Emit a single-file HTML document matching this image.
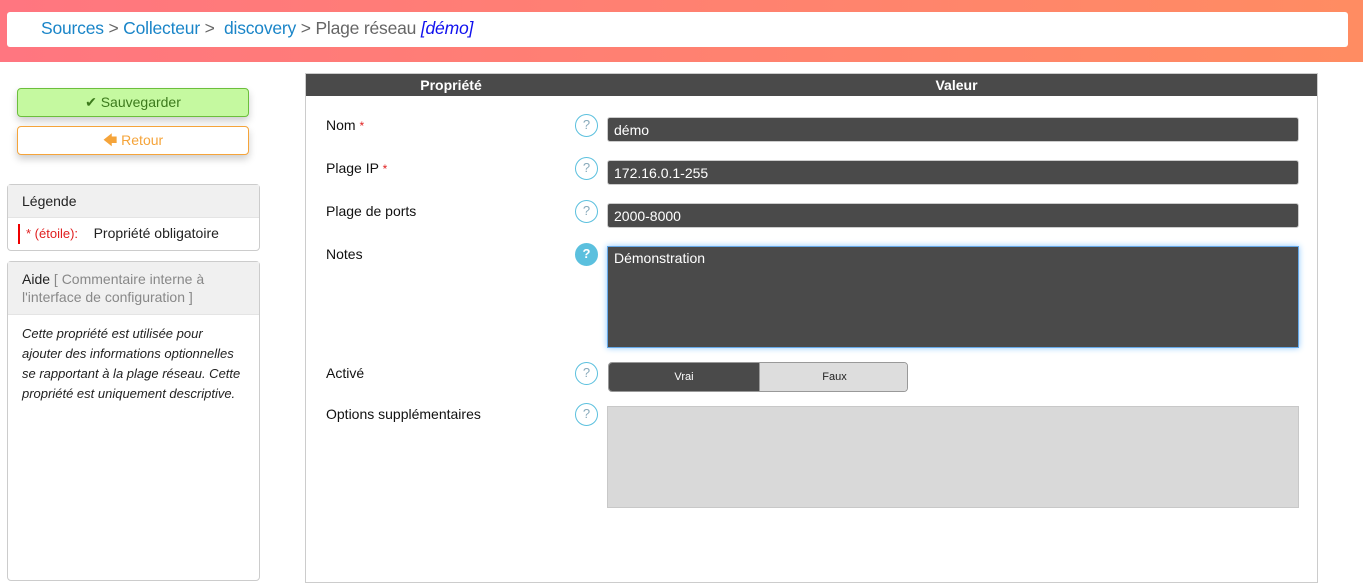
<!DOCTYPE html>
<html><head><meta charset="utf-8"><style>
*{box-sizing:border-box;margin:0;padding:0}
body{width:1363px;height:570px;overflow:hidden;background:#fff;font-family:"Liberation Sans",sans-serif;position:relative;color:#222}
.a{position:absolute}
.hdr{left:0;top:0;width:1363px;height:62px;background:linear-gradient(90deg,#ff7680,#ff8c62)}
.bc{left:7px;top:12px;width:1341px;height:35px;background:#fff;border-radius:3px;font-size:17.5px;padding:6px 0 0 34px;color:#666;white-space:nowrap;letter-spacing:-0.2px}
.bc .l{color:#1a85c8}
.btn{left:17px;width:232px;height:29px;border-radius:4px;font-size:14px;text-align:center;line-height:27px;box-shadow:0 4px 8px rgba(0,0,0,.2)}
.panel{left:7px;width:253px;border:1px solid #ccc;border-radius:4px;font-size:14px}
.ph{background:#f0f0f0;padding:8px 14px;border-bottom:1px solid #e4e4e4}
.lbl{left:326px;font-size:14px;color:#111}
.req{color:#e02020;font-size:12px}
.q{left:575px;width:23px;height:23px;border:1.5px solid #5bc0de;border-radius:50%;color:#8ab;font-size:13px;text-align:center;line-height:20px}
.inp{left:607px;width:692px;height:25px;background:#4a4a4a;border:1px solid #ccc;border-radius:3px;color:#fff;font-size:14px;padding:4px 0 0 6px}
</style></head><body>
<div class="a hdr"></div>
<div class="a bc"><span class="l">Sources</span> &gt; <span class="l">Collecteur</span> &gt; &nbsp;<span class="l">discovery</span> &gt; Plage réseau <i style="color:#1010ee">[démo]</i></div>

<div class="a btn" style="top:88px;background:#c5f9a0;border:1px solid #6cbf3c;color:#3c7a1c">✔ Sauvegarder</div>
<div class="a btn" style="top:126px;background:#fff;border:1px solid #f5a43a;color:#f5a43a">🡄 Retour</div>

<div class="a panel" style="top:184px;height:67px">
<div class="ph">Légende</div>
<div style="margin:6px 0 0 10px;border-left:2px solid #e00;padding-left:6px;height:20px;line-height:18px"><span style="color:#e02020;font-size:13px">* (étoile):</span>&nbsp;&nbsp;&nbsp; Propriété obligatoire</div>
</div>
<div class="a panel" style="top:261px;height:320px">
<div class="ph" style="line-height:18px;padding:8px 14px 8px 14px">Aide <span style="color:#888">[ Commentaire interne à l'interface de configuration ]</span></div>
<div style="padding:9px 14px;font-style:italic;font-size:13px;line-height:20px">Cette propriété est utilisée pour ajouter des informations optionnelles se rapportant à la plage réseau. Cette propriété est uniquement descriptive.</div>
</div>

<div class="a" style="left:305px;top:73px;width:1013px;height:510px;border:1px solid #ccc"></div>
<div class="a" style="left:306px;top:74px;width:1011px;height:22px;background:#4a4a4a;color:#fff;font-weight:bold;font-size:14px;line-height:22px">
<span class="a" style="left:0;width:290px;text-align:center">Propriété</span>
<span class="a" style="left:290px;width:721px;text-align:center">Valeur</span></div>

<div class="a lbl" style="top:117px">Nom <span class="req">*</span></div>
<div class="a lbl" style="top:160px">Plage IP <span class="req">*</span></div>
<div class="a lbl" style="top:203px">Plage de ports</div>
<div class="a lbl" style="top:246px">Notes</div>
<div class="a lbl" style="top:365px">Activé</div>
<div class="a lbl" style="top:406px">Options supplémentaires</div>

<div class="a q" style="top:114px">?</div>
<div class="a q" style="top:157px">?</div>
<div class="a q" style="top:200px">?</div>
<div class="a q" style="top:243px;background:#5bc0de;color:#fff;font-weight:bold;border-color:#5bc0de">?</div>
<div class="a q" style="top:362px">?</div>
<div class="a q" style="top:403px">?</div>

<div class="a inp" style="top:117px">démo</div>
<div class="a inp" style="top:160px">172.16.0.1-255</div>
<div class="a inp" style="top:203px">2000-8000</div>
<div class="a inp" style="top:246px;height:102px;border-color:#66a9e8;box-shadow:0 0 6px #8ec8ff;border-radius:0;padding-top:3px">Démonstration</div>
<div class="a" style="left:608px;top:362px;width:300px;height:30px;border:1px solid #999;border-radius:4px;overflow:hidden;font-size:11px;line-height:28px">
<div class="a" style="left:0;top:0;width:150px;height:28px;background:#4a4a4a;color:#fff;text-align:center">Vrai</div>
<div class="a" style="left:150px;top:0;width:150px;height:28px;background:#ddd;color:#222;text-align:center;border-left:1px solid #999">Faux</div></div>
<div class="a" style="left:607px;top:406px;width:692px;height:102px;background:#d9d9d9;border:1px solid #c8c8c8"></div>
</body></html>
